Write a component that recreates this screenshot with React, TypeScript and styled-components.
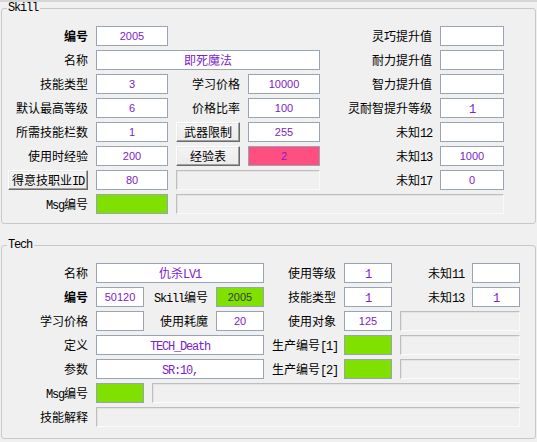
import React from 'react';
import styled, { createGlobalStyle } from 'styled-components';

const GlobalStyle = createGlobalStyle`
  html, body { margin: 0; padding: 0; background: #f0f0f0; }
  body {
    font-family: "Noto Sans CJK SC", "Liberation Sans", sans-serif;
    font-size: 12px;
    color: #000;
  }
`;

const Window = styled.div`
  width: 537px;
  height: 442px;
  box-sizing: border-box;
  padding: 0 1px;
  border-top: 2px solid #d6d6d6;
  background: #f0f0f0;
  overflow: hidden;
  display: flex;
  flex-direction: column;
  gap: 15px;
`;

const Group = styled.fieldset<{ $bottom: number }>`
  margin: 0;
  min-width: 0;
  width: 535px;
  box-sizing: border-box;
  padding: 12px 6px ${(p) => p.$bottom}px 6px;
  border: 1px solid #c9c9c9;
  border-radius: 3px;
`;

const Legend = styled.legend`
  padding: 0 2px 0 1px;
  margin-left: -1px;
  height: 12px;
  line-height: 12px;
  font-family: "Liberation Mono", "DejaVu Sans Mono", monospace;
  font-size: 12px;
  letter-spacing: -1.2px;
  color: #000;
`;

const Grid = styled.div<{ $cols: string; $rows: number }>`
  display: grid;
  grid-template-columns: ${(p) => p.$cols};
  grid-template-rows: repeat(${(p) => p.$rows}, 20px);
  column-gap: 8px;
  row-gap: 4px;
`;

const Lat = styled.span`
  font-family: "Liberation Mono", "DejaVu Sans Mono", monospace;
  font-size: 12px;
  letter-spacing: -1.2px;
`;

const Label = styled.div<{ $col?: string; $bold?: boolean }>`
  grid-column: ${(p) => p.$col ?? 'auto'};
  height: 20px;
  line-height: 20px;
  text-align: right;
  white-space: nowrap;
  font-weight: ${(p) => (p.$bold ? 700 : 400)};
  color: #000;
`;

type Tone = 'white' | 'green' | 'pink';

const toneBg: Record<Tone, string> = {
  white: '#ffffff',
  green: '#80e000',
  pink: '#ff4f80',
};

const Field = styled.div<{ $col?: string; $tone?: Tone; $num?: boolean }>`
  grid-column: ${(p) => p.$col ?? 'auto'};
  box-sizing: border-box;
  height: 20px;
  border: 1px solid #98a4b4;
  background: ${(p) => toneBg[p.$tone ?? 'white']};
  color: ${(p) => (p.$tone === 'green' ? '#3a3a3a' : '#7b22cc')};
  font-family: ${(p) =>
    p.$num ? '"Liberation Sans", Arial, sans-serif' : '"Noto Sans CJK SC", sans-serif'};
  font-size: ${(p) => (p.$num ? '11px' : '12px')};
  line-height: 18px;
  text-align: center;
  white-space: nowrap;
  overflow: hidden;
`;

const Blank = styled.div<{ $col?: string }>`
  grid-column: ${(p) => p.$col ?? 'auto'};
  box-sizing: border-box;
  height: 20px;
  border: 1px solid;
  border-color: #bdbdbd #fafafa #fafafa #bdbdbd;
  box-shadow: inset 1px 1px #e4e4e4;
  background: #f0f0f0;
`;

const Btn = styled.button<{ $col?: string }>`
  grid-column: ${(p) => p.$col ?? 'auto'};
  box-sizing: border-box;
  height: 20px;
  margin: 0;
  padding: 0;
  font-family: "Noto Sans CJK SC", sans-serif;
  font-size: 12px;
  line-height: 18px;
  color: #000;
  white-space: nowrap;
  background: linear-gradient(#f4f4f4, #ebebeb);
  border: 1px solid;
  border-color: #ffffff #6a6a6a #6a6a6a #ffffff;
  box-shadow: inset -1px -1px #a0a0a0, inset 1px 1px #e8e8e8;
`;

const SKILL_COLS = '80px 72px 64px 72px 104px 64px';
const TECH_COLS = '80px 48px 56px 48px 64px 48px 64px 48px';

export default function App() {
  return (
    <>
      <GlobalStyle />
      <Window>
        <Group $bottom={9}>
          <Legend>Skill</Legend>
          <Grid $cols={SKILL_COLS} $rows={8}>
            <Label $bold>编号</Label>
            <Field $num>2005</Field>
            <Label $col="5">灵巧提升值</Label>
            <Field />

            <Label>名称</Label>
            <Field $col="2 / 5">即死魔法</Field>
            <Label>耐力提升值</Label>
            <Field />

            <Label>技能类型</Label>
            <Field $num>3</Field>
            <Label>学习价格</Label>
            <Field $num>10000</Field>
            <Label>智力提升值</Label>
            <Field />

            <Label>默认最高等级</Label>
            <Field $num>6</Field>
            <Label>价格比率</Label>
            <Field $num>100</Field>
            <Label>灵耐智提升等级</Label>
            <Field><Lat>1</Lat></Field>

            <Label>所需技能栏数</Label>
            <Field $num>1</Field>
            <Btn>武器限制</Btn>
            <Field $num>255</Field>
            <Label>未知<Lat>12</Lat></Label>
            <Field />

            <Label>使用时经验</Label>
            <Field $num>200</Field>
            <Btn>经验表</Btn>
            <Field $num $tone="pink">2</Field>
            <Label>未知<Lat>13</Lat></Label>
            <Field $num>1000</Field>

            <Btn>得意技职业<Lat>ID</Lat></Btn>
            <Field $num>80</Field>
            <Blank $col="3 / 5" />
            <Label>未知<Lat>17</Lat></Label>
            <Field $num>0</Field>

            <Label><Lat>Msg</Lat>编号</Label>
            <Field $tone="green" />
            <Blank $col="3 / 7" />
          </Grid>
        </Group>

        <Group $bottom={11}>
          <Legend>Tech</Legend>
          <Grid $cols={TECH_COLS} $rows={7}>
            <Label>名称</Label>
            <Field $col="2 / 5">仇杀<Lat>LV1</Lat></Field>
            <Label>使用等级</Label>
            <Field><Lat>1</Lat></Field>
            <Label>未知<Lat>11</Lat></Label>
            <Field />

            <Label $bold>编号</Label>
            <Field $num>50120</Field>
            <Label><Lat>Skill</Lat>编号</Label>
            <Field $num $tone="green">2005</Field>
            <Label>技能类型</Label>
            <Field><Lat>1</Lat></Field>
            <Label>未知<Lat>13</Lat></Label>
            <Field><Lat>1</Lat></Field>

            <Label>学习价格</Label>
            <Field />
            <Label>使用耗魔</Label>
            <Field $num>20</Field>
            <Label>使用对象</Label>
            <Field $num>125</Field>
            <Blank $col="7 / 9" />

            <Label>定义</Label>
            <Field $col="2 / 5"><Lat>TECH_Death</Lat></Field>
            <Label>生产编号<Lat>[1]</Lat></Label>
            <Field $tone="green" />
            <Blank $col="7 / 9" />

            <Label>参数</Label>
            <Field $col="2 / 5"><Lat>SR:10,</Lat></Field>
            <Label>生产编号<Lat>[2]</Lat></Label>
            <Field $tone="green" />
            <Blank $col="7 / 9" />

            <Label><Lat>Msg</Lat>编号</Label>
            <Field $tone="green" />
            <Blank $col="3 / 9" />

            <Label>技能解释</Label>
            <Blank $col="2 / 9" />
          </Grid>
        </Group>
      </Window>
    </>
  );
}
